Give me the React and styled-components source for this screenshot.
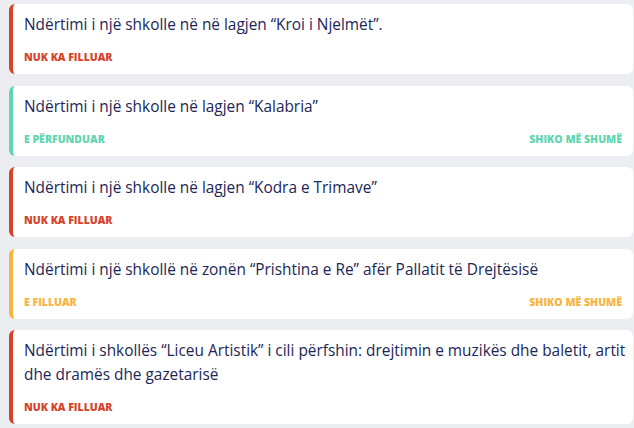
import React from 'react';
import styled, { createGlobalStyle } from 'styled-components';

const GlobalStyle = createGlobalStyle`
    body {
        margin: 0;
        background: #ecedf1;
        font-family: "Open Sans", "Liberation Sans", sans-serif;
    }
`;

const COLORS = {
    red: '#d5442a',
    green: '#5fd5b1',
    orange: '#f8b43e',
};

const List = styled.div`
    display: flex;
    flex-direction: column;
    gap: 11.5px;
    padding: 4px 1px 0 9px;
`;

const Card = styled.div`
    background: #ffffff;
    border-radius: 6px;
    border-left: 4px solid ${(p) => COLORS[p.tone]};
    padding: 9px 6px 10px 11px;
    display: flex;
    flex-direction: column;
    gap: 13px;
`;

const Title = styled.div`
    font-size: 15.4px;
    line-height: 24px;
    color: #1c2657;
`;

const Footer = styled.div`
    display: flex;
    justify-content: space-between;
    align-items: center;
    height: 14px;
    padding-right: 5px;
`;

const Label = styled.span`
    font-size: 10.5px;
    font-weight: 800;
    text-transform: uppercase;
    color: ${(p) => COLORS[p.tone]};
`;

const projects = [
    { title: 'Ndërtimi i një shkolle në në lagjen “Kroi i Njelmët”.', status: 'Nuk ka filluar', tone: 'red' },
    { title: 'Ndërtimi i një shkolle në lagjen “Kalabria”', status: 'E përfunduar', tone: 'green', more: true },
    { title: 'Ndërtimi i një shkolle në lagjen “Kodra e Trimave”', status: 'Nuk ka filluar', tone: 'red' },
    { title: 'Ndërtimi i një shkollë në zonën “Prishtina e Re” afër Pallatit të Drejtësisë', status: 'E filluar', tone: 'orange', more: true },
    { title: 'Ndërtimi i shkollës “Liceu Artistik” i cili përfshin: drejtimin e muzikës dhe baletit, artit dhe dramës dhe gazetarisë', status: 'Nuk ka filluar', tone: 'red' },
];

const App = () => {
    return (
        <>
            <GlobalStyle />
            <List>
                {projects.map((p, i) => (
                    <Card key={i} tone={p.tone}>
                        <Title>{p.title}</Title>
                        <Footer>
                            <Label tone={p.tone}>{p.status}</Label>
                            {p.more && <Label tone={p.tone}>Shiko më shumë</Label>}
                        </Footer>
                    </Card>
                ))}
            </List>
        </>
    );
};

export default App;
